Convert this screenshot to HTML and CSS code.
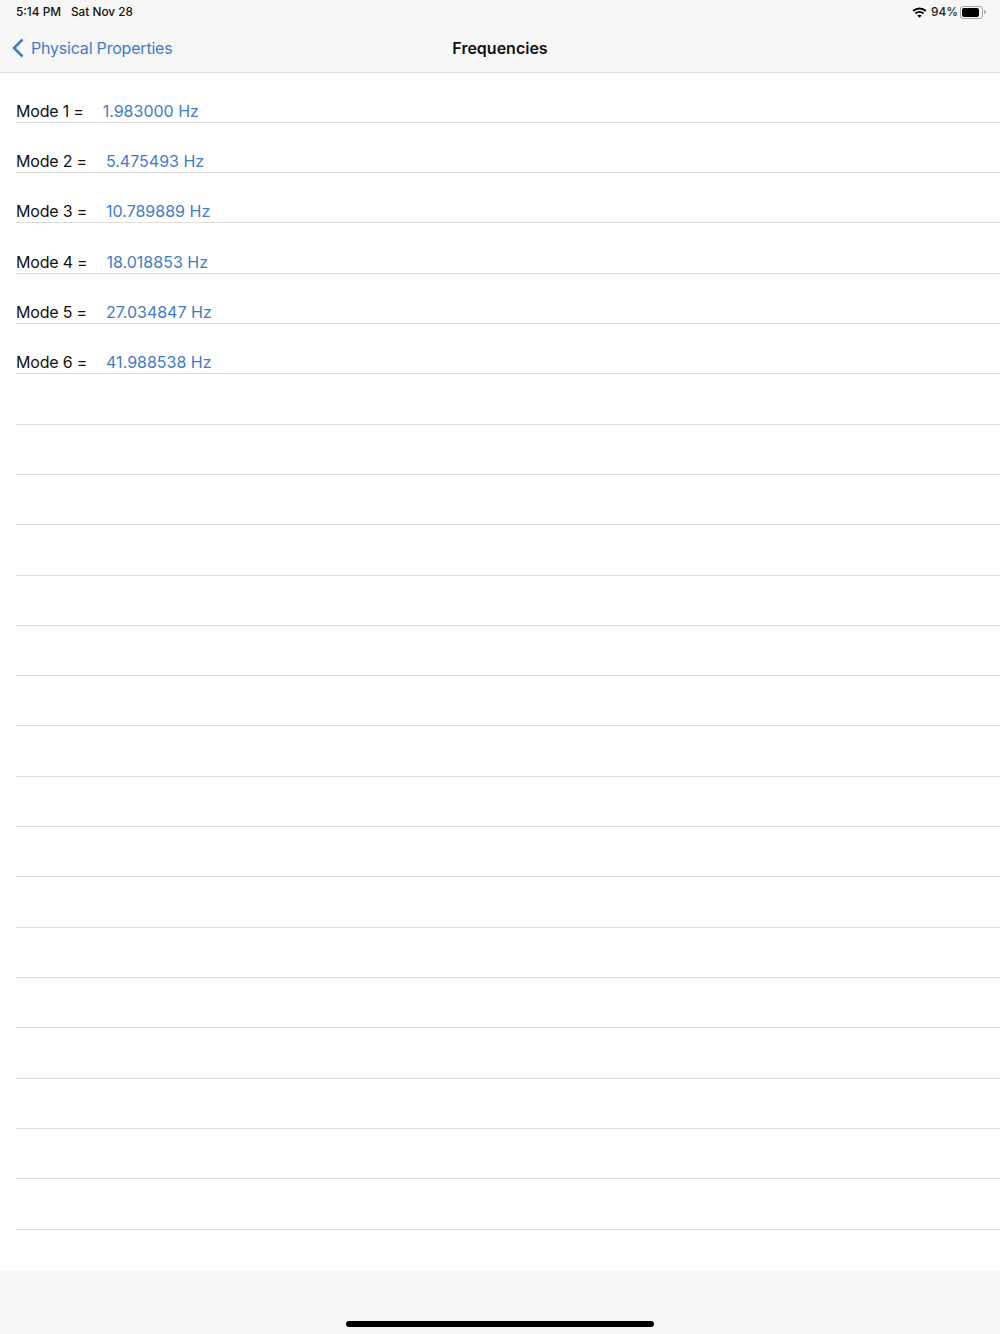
FILE: index.html
```html
<!DOCTYPE html>
<html lang="en">

<head>
  <meta charset="UTF-8">
  <meta name="viewport" content="width=device-width, initial-scale=1.0">
  <title>Frequencies</title>
  <link rel="stylesheet" href="styles.css">
</head>

<body>
  <header class="top-bar">
    <div class="status-bar">
      <div class="status-left">
        <span>5:14 PM</span>
        <span>Sat Nov 28</span>
      </div>
      <div class="status-right">
        <svg class="wifi" width="15" height="11" viewBox="0 0 15 11">
          <path d="M1.200 4A9.200 9.200 0 0 1 13.800 4" />
          <path d="M3.500 6.500A5.800 5.800 0 0 1 11.500 6.500" />
          <path class="wifi-dot" d="M7.500 10.800 5.300 8.500c1.200-1.100 3.200-1.100 4.400 0z" />
        </svg>
        <span>94%</span>
        <div class="battery">
          <div class="battery-level"></div>
        </div>
        <div class="battery-cap"></div>
      </div>
    </div>
    <nav class="nav-bar">
      <a class="back-link" href="#">
        <svg width="13" height="20" viewBox="0 0 13 20">
          <path d="M11.500 1.500 3 10l8.500 8.500" fill="none" stroke="#3f7bcb" stroke-width="2.600" />
        </svg>
        Physical Properties
      </a>
      <h1 class="nav-title">Frequencies</h1>
    </nav>
  </header>

  <!-- Modes -->
  <main class="mode-list">
    <div class="mode-row"><span class="mode-label">Mode 1 =</span><span class="mode-value">1.983000 Hz</span></div>
    <div class="mode-row"><span class="mode-label">Mode 2 =</span><span class="mode-value">5.475493 Hz</span></div>
    <div class="mode-row"><span class="mode-label">Mode 3 =</span><span class="mode-value">10.789889 Hz</span></div>
    <div class="mode-row"><span class="mode-label">Mode 4 =</span><span class="mode-value">18.018853 Hz</span></div>
    <div class="mode-row"><span class="mode-label">Mode 5 =</span><span class="mode-value">27.034847 Hz</span></div>
    <div class="mode-row"><span class="mode-label">Mode 6 =</span><span class="mode-value">41.988538 Hz</span></div>
    <div class="mode-row"></div>
    <div class="mode-row"></div>
    <div class="mode-row"></div>
    <div class="mode-row"></div>
    <div class="mode-row"></div>
    <div class="mode-row"></div>
    <div class="mode-row"></div>
    <div class="mode-row"></div>
    <div class="mode-row"></div>
    <div class="mode-row"></div>
    <div class="mode-row"></div>
    <div class="mode-row"></div>
    <div class="mode-row"></div>
    <div class="mode-row"></div>
    <div class="mode-row"></div>
    <div class="mode-row"></div>
    <div class="mode-row"></div>
  </main>

  <footer class="bottom-bar">
    <div class="home-indicator"></div>
  </footer>
</body>

</html>
```

FILE: styles.css
```css
html,
body {
  height: 100%;
  margin: 0;
  padding: 0;
}

body {
  display: flex;
  flex-direction: column;
  font-family: Inter, "Liberation Sans", sans-serif;
  background-color: #ffffff;
  color: #111111;
  overflow: hidden;
}

.top-bar {
  background-color: #f7f7f7;
  box-shadow: 0 1px 0 #d9d9d9;
  height: 72px;
  flex-shrink: 0;
}

.status-bar {
  display: flex;
  justify-content: space-between;
  align-items: center;
  height: 24px;
  padding: 0 14px 0 16px;
  font-size: 11.800px;
  font-weight: 500;
}

.status-left {
  display: flex;
  gap: 10px;
}

.status-right {
  display: flex;
  align-items: center;
  color: #222222;
}

.wifi {
  margin-right: 4px;
  fill: none;
  stroke: #000000;
  stroke-width: 1.900;
}

.wifi-dot {
  fill: #000000;
  stroke: none;
}

.battery {
  width: 19px;
  height: 9px;
  margin-left: 2px;
  padding: 1px;
  border: 1px solid #a8a8a8;
  border-radius: 3px;
}

.battery-level {
  width: 17px;
  height: 9px;
  background-color: #000000;
  border-radius: 2px;
}

.battery-cap {
  width: 2px;
  height: 4px;
  margin-left: 1px;
  background-color: #a8a8a8;
  border-radius: 0 2px 2px 0;
}

.nav-bar {
  position: relative;
  display: flex;
  align-items: center;
  justify-content: center;
  height: 48px;
}

.back-link {
  position: absolute;
  left: 11px;
  top: 0;
  height: 48px;
  display: flex;
  align-items: center;
  gap: 7px;
  color: #3f7bcb;
  font-size: 16px;
  letter-spacing: -0.200px;
  text-decoration: none;
}

.nav-title {
  margin: 0;
  font-size: 16px;
  font-weight: 600;
}

.mode-list {
  flex-shrink: 0;
  margin-top: 0.400px;
}

.mode-row {
  display: flex;
  align-items: flex-end;
  box-sizing: border-box;
  height: 50.320px;
  margin-left: 16px;
  border-bottom: 1px solid #dedede;
  font-size: 16px;
  line-height: 22px;
}

.mode-label {
  letter-spacing: -0.200px;
}

.mode-value {
  margin-left: 19px;
  color: #3f7bcb;
}

.bottom-bar {
  margin-top: auto;
  height: 63px;
  display: flex;
  justify-content: center;
  background-color: #f6f6f6;
}

.home-indicator {
  width: 308px;
  height: 6px;
  margin-top: 50px;
  background-color: #000000;
  border-radius: 3px;
}
```
